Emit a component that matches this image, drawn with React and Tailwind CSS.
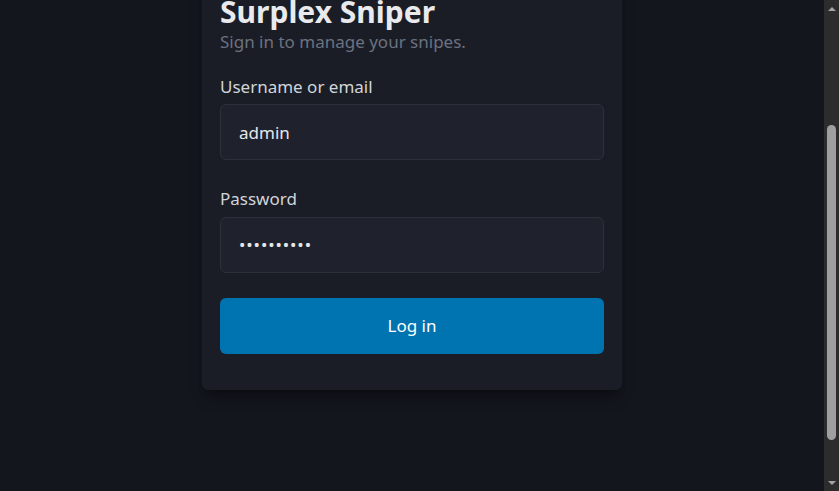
import React, { useEffect, useRef } from 'react';

// Drawn scrollbar: the headless browser hides native ones
const ScrollBar = () => (
  <div className="flex w-[15px] shrink-0 flex-col bg-[#2c2c2c]">
    <div className="flex h-[17px] items-center justify-center">
      <svg width="8" height="4" viewBox="0 0 8 4">
        <path d="M4 0L8 4H0Z" fill="#a3a3a3" />
      </svg>
    </div>
    <div className="flex flex-1 flex-col items-center">
      <div className="h-[108px]" />
      <div className="h-[315px] w-[9px] rounded-full bg-[#9f9f9f]" />
    </div>
    <div className="flex h-[17px] items-center justify-center">
      <svg width="8" height="4" viewBox="0 0 8 4">
        <path d="M0 0H8L4 4Z" fill="#a3a3a3" />
      </svg>
    </div>
  </div>
);

export default function App() {
  const scroller = useRef(null);

  useEffect(() => {
    if (scroller.current) scroller.current.scrollTop = 168;
  }, []);

  return (
    <div className="flex h-screen bg-[#13161d] font-['Noto_Sans',sans-serif]">
      <div ref={scroller} className="min-w-0 flex-1 overflow-y-scroll [scrollbar-width:none]">
        <div className="flex justify-center pt-[145px] pb-[154px]">
          {/* Login card */}
          <div className="w-[420px] rounded-md bg-[#1a1d25] px-[18px] pt-[18px] pb-9 shadow-lg shadow-black/30">
            <h1 className="text-[30px] font-bold leading-[34px] text-[#e8eaee]">Surplex Sniper</h1>
            <p className="text-[17px] text-[#6b7280]">Sign in to manage your snipes.</p>

            <form className="mt-[19px] flex flex-col">
              <label className="mb-[5px] text-[17px] text-[#d1d5db]">Username or email</label>
              <input
                defaultValue="admin"
                className="h-14 rounded-md border border-[#2c303b] bg-[#1f222c] px-[18px] text-[17px] text-[#e5e7eb] outline-none"
              />

              <label className="mt-[26px] mb-[5px] text-[17px] text-[#d1d5db]">Password</label>
              <input
                type="password"
                defaultValue="secretpass"
                className="h-14 rounded-md border border-[#2c303b] bg-[#1f222c] px-[18px] text-[17px] tracking-[0.9px] text-[#e5e7eb] outline-none"
              />

              <button
                type="button"
                className="mt-[25px] h-14 rounded-md bg-[#0073b1] text-[17px] text-white"
              >
                Log in
              </button>
            </form>
          </div>
        </div>
      </div>
      <ScrollBar />
    </div>
  );
}
